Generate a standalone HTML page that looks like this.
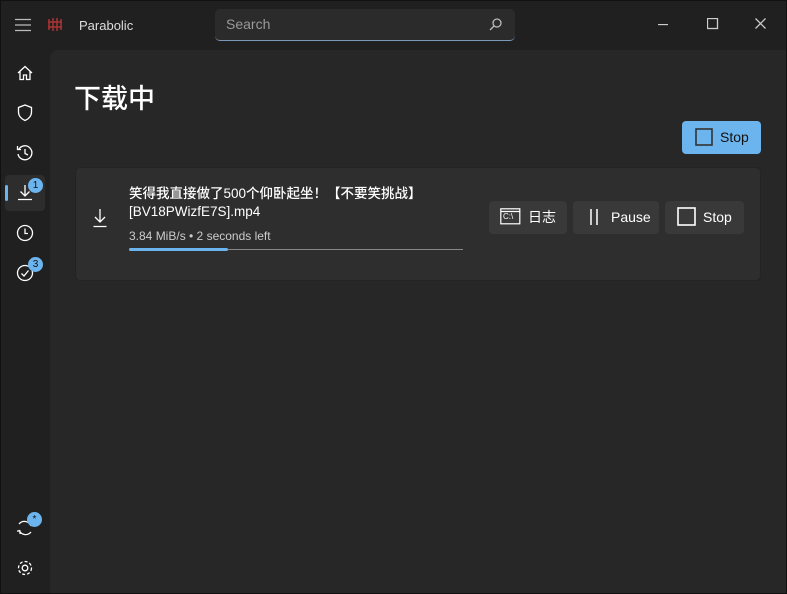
<!DOCTYPE html><html><head><meta charset="utf-8"><style>
*{box-sizing:border-box;margin:0;padding:0}
body{width:787px;height:594px;background:#202020;font-family:"Liberation Sans","Noto Sans CJK SC",sans-serif;color:#fff;position:relative;overflow:hidden}
.a{position:absolute}
svg{position:absolute;fill:none;stroke:#fff;stroke-width:1.3}
.content{left:50px;top:50px;width:737px;height:544px;background:#272727;border-top-left-radius:8px}
.card{left:75px;top:167px;width:686px;height:114px;background:#2e2e2e;border:1px solid #232323;border-radius:5px}
.btn{background:#393939;border-radius:4px;height:33px;top:201px;font-size:14px;line-height:33px}
.badge{width:15px;height:15px;border-radius:50%;background:#6cb4ee;color:#111;font-size:10px;text-align:center;line-height:15px}
.frame{left:0;top:0;width:787px;height:594px;border:1px solid #111;pointer-events:none}
</style></head><body>
<svg style="left:15px;top:18px" width="16" height="14"><path d="M0 1.5H16M0 7H16M0 12.5H16" stroke="#bbb"/></svg>
<svg style="left:47px;top:17px" width="16" height="15"><path d="M2 2V13M6 1V14M10 1V14M14 2V13M1 5H15M1 10H15" stroke="#a33" stroke-width="1.5"/></svg>
<div class="a" style="left:79px;top:18px;font-size:13px;color:#ddd">Parabolic</div>
<div class="a" style="left:215px;top:9px;width:300px;height:32px;background:#2b2b2b;border-radius:5px;border-bottom:1px solid #7a9bb8"></div>
<div class="a" style="left:226px;top:16px;font-size:14px;color:#999">Search</div>
<svg style="left:489px;top:18px" width="13" height="13"><circle cx="8" cy="5" r="4" stroke="#bbb"/><path d="M5 8L1 12" stroke="#bbb"/></svg>
<svg style="left:658px;top:24px" width="12" height="2"><path d="M0 .5H10" stroke="#ccc"/></svg>
<svg style="left:707px;top:18px" width="12" height="12"><rect x=".5" y=".5" width="10" height="10" stroke="#ccc"/></svg>
<svg style="left:755px;top:18px" width="12" height="12"><path d="M.5 .5L10.5 10.5M10.5 .5L.5 10.5" stroke="#ccc"/></svg>
<div class="a content"></div>
<svg style="left:17px;top:65px" width="16" height="16"><path d="M1 8L8 1.5L15 8M3 6.5V14.5H6.5V10H9.5V14.5H13V6.5"/></svg>
<svg style="left:17px;top:104px" width="16" height="18"><path d="M8 1L14.5 3.5V8C14.5 12 11.5 15 8 16.5C4.5 15 1.5 12 1.5 8V3.5Z"/></svg>
<svg style="left:16px;top:144px" width="18" height="18"><path d="M3 5A7 7 0 1 1 2 10M1.5 2V5.5H5M9 5V9.5L12 11"/></svg>
<div class="a" style="left:5px;top:175px;width:40px;height:36px;background:#2d2d2d;border-radius:4px"></div>
<div class="a" style="left:5px;top:185px;width:3px;height:16px;background:#6cb4ee;border-radius:2px"></div>
<svg style="left:17px;top:184px" width="16" height="17"><path d="M8 1V12M3.5 7.5L8 12L12.5 7.5M1 15.5H15"/></svg>
<div class="a badge" style="left:28px;top:178px">1</div>
<svg style="left:16px;top:224px" width="18" height="18"><circle cx="9" cy="9" r="7.5"/><path d="M9 4.5V9.5H12"/></svg>
<svg style="left:16px;top:264px" width="18" height="18"><circle cx="9" cy="9" r="7.5"/><path d="M5.5 9.5L8 12L12.5 6.5"/></svg>
<div class="a badge" style="left:28px;top:257px">3</div>
<svg style="left:16px;top:519px" width="18" height="18"><path d="M15 7A7 7 0 0 0 3 5M3 11A7 7 0 0 0 15 13M1 12H4V15"/></svg>
<div class="a badge" style="left:27px;top:512px">*</div>
<svg style="left:16px;top:559px" width="18" height="18"><circle cx="9" cy="9" r="2.8"/><circle cx="9" cy="9" r="6.5" stroke-dasharray="3 2"/></svg>
<div class="a" style="left:74px;top:77px;font-size:27px;font-weight:500">下载中</div>
<div class="a" style="left:682px;top:121px;width:79px;height:33px;background:#6cb4ee;border-radius:4px"></div>
<svg style="left:695px;top:128px" width="19" height="19"><rect x="1" y="1" width="16" height="16" stroke="#333" stroke-width="1.6"/></svg>
<div class="a" style="left:720px;top:129px;font-size:14px;color:#111">Stop</div>
<div class="a card"></div>
<svg style="left:92px;top:208px" width="16" height="20"><path d="M8 1V14M3 9L8 14L13 9M1.5 18.5H14.5"/></svg>
<div class="a" style="left:129px;top:185px;font-size:13.5px;line-height:18px;font-weight:500">笑得我直接做了500个仰卧起坐！【不要笑挑战】<br>[BV18PWizfE7S].mp4</div>
<div class="a" style="left:129px;top:229px;font-size:12px;color:#ccc">3.84 MiB/s • 2 seconds left</div>
<div class="a" style="left:129px;top:249px;width:334px;height:1px;background:#888"></div>
<div class="a" style="left:129px;top:248px;width:99px;height:3px;background:#6cb4ee;border-radius:2px"></div>
<div class="a btn" style="left:489px;width:78px"></div>
<svg style="left:500px;top:208px" width="22" height="18"><rect x=".8" y=".8" width="19" height="15" stroke-width="1.2"/><path d="M1 3.5H20"/></svg>
<div class="a" style="left:503px;top:212px;font-size:8px">C:\</div>
<div class="a" style="left:528px;top:201px;font-size:14px;line-height:33px">日志</div>
<div class="a btn" style="left:573px;width:86px"></div>
<svg style="left:589px;top:208px" width="10" height="18"><path d="M2 1V17M8 1V17" stroke-width="1.5"/></svg>
<div class="a" style="left:611px;top:201px;font-size:14px;line-height:33px">Pause</div>
<div class="a btn" style="left:665px;width:79px"></div>
<svg style="left:677px;top:207px" width="20" height="20"><rect x="1" y="1" width="17" height="17" stroke-width="1.6"/></svg>
<div class="a" style="left:703px;top:201px;font-size:14px;line-height:33px">Stop</div>
<div class="a frame"></div>
</body></html>
